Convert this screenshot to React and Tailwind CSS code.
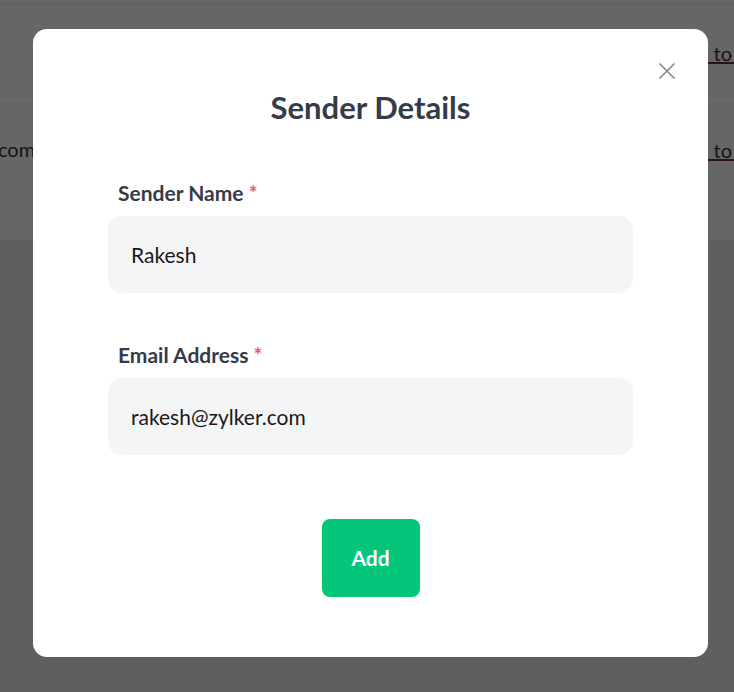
import { X } from 'lucide-react';

function Field({ label, value }) {
  return (
    <div className="flex flex-col">
      <label className="pl-[10px] text-[21px] font-bold text-[#343c48] leading-7">
        {label} <span className="text-[#e8587a]">*</span>
      </label>
      <div className="mt-[9px] h-[77px] rounded-[14px] bg-[#f4f5f7] flex items-center px-[23px] text-[21px] text-[#1d1718]">
        {value}
      </div>
    </div>
  );
}

function LinkText() {
  return (
    <span className="inline-block text-[20px] leading-[17px] text-[#171112] pl-[8px] pr-[2px] border-b-2 border-[#2b1418]">
      to
    </span>
  );
}

export default function App() {
  return (
    <div className="relative h-[692px] w-[734px] overflow-hidden bg-[#666666] font-['Lato','Liberation_Sans',sans-serif]">
      {/* page under the overlay */}
      <div className="h-[5px] border-b border-[#5f5f5f]" />
      <div className="h-[95px] border-b border-[#6d6d6d] flex justify-end items-start pt-[40px]">
        <LinkText />
      </div>
      <div className="h-[140px] flex justify-between items-start pt-[34px]">
        <span className="text-[20px] text-[#171112] -ml-[2px]">com</span>
        <div className="mt-[6px]">
          <LinkText />
        </div>
      </div>
      <div className="h-[452px] bg-[#5f5f5f]" />

      {/* modal */}
      <div className="absolute inset-0 pl-[33px] pt-[29px]">
        <div className="relative w-[675px] h-[628px] rounded-[14px] bg-white px-[75px] pt-[60px]">
          <button className="absolute right-[27px] top-[28px] text-[#8c8c8c]">
            <X size={28} strokeWidth={1.5} />
          </button>
          <h2 className="text-center text-[31px] font-bold text-[#343c48] leading-9">Sender Details</h2>
          <div className="mt-[54px] flex flex-col gap-[48px]">
            <Field label="Sender Name" value="Rakesh" />
            <Field label="Email Address" value="rakesh@zylker.com" />
          </div>
          <div className="mt-[64px] flex justify-center">
            <button className="h-[78px] w-[98px] rounded-[8px] bg-[#03c67a] text-[21px] font-bold text-white">
              Add
            </button>
          </div>
        </div>
      </div>
    </div>
  );
}
